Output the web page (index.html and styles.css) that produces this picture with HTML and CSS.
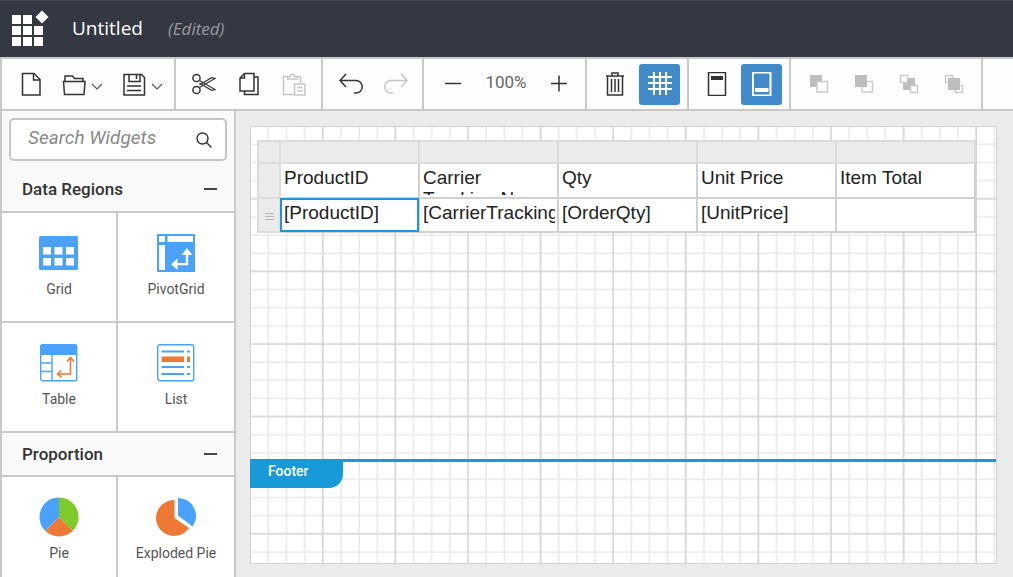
FILE: index.html
```html
<!DOCTYPE html>
<html lang="en">
<head>
<meta charset="utf-8">
<meta name="viewport" content="width=device-width, initial-scale=1">
<title>Untitled - Report Designer</title>
<link rel="stylesheet" href="styles.css">
</head>
<body>
<div class="app">
  <header class="titlebar">
    <svg class="logo" width="38" height="36" viewBox="0 0 38 36" fill="#fff" aria-hidden="true">
      <path d="M1 5h9v9H1zM12 5h9v9h-9zM1 16h9v9H1zM12 16h9v9h-9zM23 16h9v9h-9zM1 27h9v9H1zM12 27h9v9h-9zM23 27h9v9h-9z"/>
      <path d="M31 0.500l6.500 6.500-6.500 6.500-6.500-6.500z"/>
    </svg>
    <h1 class="doc-name">Untitled</h1>
    <span class="doc-state">(Edited)</span>
  </header>

  <div class="toolbar" role="toolbar" aria-label="Report tools">
    <div class="group files">
      <button class="tool" aria-label="New"><svg viewBox="0 0 24 24"><path d="M3.500 1.500h11.500l6 6V23H3.500z"/><path d="M14.500 1.500V8H21"/></svg></button>
      <button class="tool menu" aria-label="Open"><svg viewBox="0 0 24 24"><path d="M2.500 22.500L1.500 9.500h21.500L22 22.500zM3 9.500V4h7.500l2 2.500H21v3"/></svg><svg class="chevron" viewBox="0 0 12 24"><path d="M1 12l5 5 5-5"/></svg></button>
      <button class="tool menu" aria-label="Save"><svg viewBox="0 0 24 24"><path d="M2 2.500h17.500l3 3V23H2zM7 2.500v7h11v-7M14.500 3v4M5 14h14M5 18.500h14"/></svg><svg class="chevron" viewBox="0 0 12 24"><path d="M1 12l5 5 5-5"/></svg></button>
    </div>
    <div class="group clipboard">
      <button class="tool" aria-label="Cut"><svg viewBox="0 0 24 24"><circle cx="4.500" cy="6" r="3.600"/><circle cx="4.500" cy="18" r="3.600"/><path stroke-width="1.200" d="M7.500 8.500L23 17.500l-3.500.8L7.500 11M7.500 15.500L23 6.500l-3.500-.8L7.500 13"/></svg></button>
      <button class="tool" aria-label="Copy"><svg viewBox="0 0 24 24"><path d="M7.500 1.500H17V19H3V6zM7.500 1.500V6H3M17 5h4v17.500H7.500V19"/></svg></button>
      <button class="tool off" aria-label="Paste" disabled><svg viewBox="0 0 24 24"><path d="M12 22.500H1.500V4.500H6M14.500 4.500h4V11M5.500 7V4.500h2.800a2.200 2.200 0 0 1 4.400 0h2.800V7zM12.500 12H23v11H12.500zM15 15.500h5.500M15 19h5.500"/></svg></button>
    </div>
    <div class="group history">
      <button class="tool" aria-label="Undo"><svg viewBox="0 0 24 24"><path d="M7 2L1 8.500 7 15M1 8.500h16a6 6 0 0 1 0 12.500h-2"/></svg></button>
      <button class="tool off" aria-label="Redo" disabled><svg viewBox="0 0 24 24"><path d="M17 2l6 6.500L17 15M23 8.500H7A6 6 0 0 0 7 21h2"/></svg></button>
    </div>
    <div class="group zoom">
      <button class="tool" aria-label="Zoom out"><svg viewBox="0 0 24 24"><path d="M4 11.500h16"/></svg></button>
      <output class="zoom-value">100%</output>
      <button class="tool" aria-label="Zoom in"><svg viewBox="0 0 24 24"><path d="M4 11.500h16M12 3.500v16"/></svg></button>
    </div>
    <div class="group toggles">
      <button class="tool" aria-label="Delete"><svg viewBox="0 0 24 24"><path d="M4.500 4h15v19h-15zM3 4h18M9 3.500V1h6v2.500M8.500 7v13M12 7v13M15.500 7v13"/></svg></button>
      <button class="tool on" aria-label="Show gridlines" aria-pressed="true"><svg viewBox="0 0 24 24"><path stroke-width="2" d="M6 0v23M12 0v23M18 0v23M0 5h24M0 11h24M0 17h24"/></svg></button>
    </div>
    <div class="group toggles">
      <button class="tool" aria-label="Header"><svg viewBox="0 0 24 24"><path d="M3.500 0.500h17v23h-17z"/><path fill="#333" stroke="none" d="M6 4h12v4H6z"/></svg></button>
      <button class="tool on" aria-label="Footer" aria-pressed="true"><svg viewBox="0 0 24 24"><path stroke-width="2" d="M3 0.500h17.500v23H3z"/><path fill="#fff" stroke="none" d="M5 16h13.500v4H5z"/></svg></button>
    </div>
    <div class="group order">
      <button class="tool off" aria-label="Send to back" disabled><svg viewBox="0 0 24 24"><path class="solid" d="M3 3h12v12H3z"/><path class="hollow" d="M10 9.500h10.500V20H10z"/></svg></button>
      <button class="tool off" aria-label="Bring to front" disabled><svg viewBox="0 0 24 24"><path class="hollow" d="M10 9.500h10.500V20H10z"/><path class="solid" d="M3 3h12v12H3z"/></svg></button>
      <button class="tool off" aria-label="Send backward" disabled><svg viewBox="0 0 24 24"><path class="solid" d="M6 6h12v12H6z"/><path class="hollow" d="M3.500 3.500h7v7h-7zM13.500 13.500h7v7h-7z"/></svg></button>
      <button class="tool off" aria-label="Bring forward" disabled><svg viewBox="0 0 24 24"><path class="hollow" d="M3.500 3.500h7v7h-7zM13.500 13.500h7v7h-7z"/><path class="solid" d="M6 6h12v12H6z"/></svg></button>
    </div>
  </div>

  <main class="workspace">
    <aside class="sidebar">
      <div class="search">
        <input type="search" placeholder="Search Widgets" aria-label="Search Widgets">
        <svg width="18" height="18" viewBox="0 0 18 18" fill="none" stroke="#333" stroke-width="1.400" aria-hidden="true"><circle cx="7.500" cy="7.500" r="5.500"/><path d="M11.500 11.500l5 5"/></svg>
      </div>

      <section>
        <button class="category first" aria-expanded="true"><span>Data Regions</span><i class="dash"></i></button>
        <div class="tiles">
          <button class="tile">
            <svg viewBox="0 0 40 40"><rect y="3" width="39" height="34" rx="1.500" fill="#4aa2fc"/><path fill="#fff" d="M4 14h8v7.500H4zM15.500 14h8v7.500h-8zM27 14h8v7.500h-8zM4 25h8v7.500H4zM15.500 25h8v7.500h-8zM27 25h8v7.500h-8z"/></svg>
            <span>Grid</span>
          </button>
          <button class="tile">
            <svg viewBox="0 0 40 40"><path fill="#4aa2fc" d="M1 1h38v38H1z"/><path fill="#fff" d="M3 3h6v6H3zM11.500 3H37v6H11.500zM3 12h6v25H3zM31 15l5.500 7h-4.300v10.200H21.500v4.800l-6.500-5.800 6.500-5.700V30h8.300v-8h-4.300z"/></svg>
            <span>PivotGrid</span>
          </button>
          <button class="tile">
            <svg viewBox="0 0 40 40" fill="none"><rect x="1.700" y="1.700" width="36" height="36" rx="2" stroke="#4aa2fc" stroke-width="1.400"/><path fill="#4aa2fc" d="M1 3l2-2h33l2 2v9H1z"/><path stroke="#4aa2fc" stroke-width="1.400" d="M13 12v26M1 20h12M1 28.500h12"/><path stroke="#ee7935" stroke-width="1.600" d="M31.500 15v16H19M28 18.500l3.500-4 3.500 4M22.500 27.500L18.500 31l4 3.500"/></svg>
            <span>Table</span>
          </button>
          <button class="tile">
            <svg viewBox="0 0 40 40" fill="none"><rect x="1.700" y="1.700" width="36" height="36" rx="2" stroke="#4aa2fc" stroke-width="1.400"/><path stroke="#4aa2fc" stroke-width="1.800" d="M5.500 8.500H28M31 8.500h3M5.500 24H28M31 24h3M5.500 31H28M31 31h3"/><path fill="#ee7935" d="M5.500 13.500H28v5.500H5.500zM31 13.500h3v5.500h-3z"/></svg>
            <span>List</span>
          </button>
        </div>
      </section>

      <section>
        <button class="category" aria-expanded="true"><span>Proportion</span><i class="dash"></i></button>
        <div class="tiles">
          <button class="tile">
            <svg viewBox="0 0 40 40"><path fill="#7dcb29" d="M20 20V.5A19.500 19.500 0 0 1 33.800 33.800z"/><path fill="#ee7935" d="M20 20l13.800 13.800a19.500 19.500 0 0 1-27.600 0z"/><path fill="#4aa2fc" d="M20 20L6.200 33.800A19.500 19.500 0 0 1 20 .5z"/></svg>
            <span>Pie</span>
          </button>
          <button class="tile">
            <svg viewBox="0 0 40 40"><path fill="#ee7935" d="M18.500 21V3a18 18 0 1 0 14.500 28z"/><path fill="#4aa2fc" d="M22 1a18 18 0 0 1 14.500 28.500L22 18.500z"/></svg>
            <span>Exploded Pie</span>
          </button>
        </div>
      </section>
    </aside>

    <div class="canvas">
      <div class="paper">
        <section class="area body-area">
          <svg class="gridlines" aria-hidden="true">
            <defs>
              <pattern id="minor" width="18.150" height="18.150" patternUnits="userSpaceOnUse"><path d="M18.150 0v18.150H0" fill="none" stroke="#e9e9e9" stroke-width="3"/></pattern>
              <pattern id="major" width="72.600" height="72.600" patternUnits="userSpaceOnUse"><path d="M72.600 0v72.600H0" fill="none" stroke="#d6d6d6" stroke-width="3"/></pattern>
            </defs>
            <rect width="100%" height="100%" fill="url(#minor)"/>
            <rect width="100%" height="100%" fill="url(#major)"/>
          </svg>
          <table class="tablix">
            <colgroup><col class="grip-col"><col><col><col><col><col></colgroup>
            <thead>
              <tr class="handles"><td></td><td></td><td></td><td></td><td></td><td></td></tr>
              <tr><td class="grip"></td><th><div>ProductID</div></th><th><div>Carrier Tracking No</div></th><th><div>Qty</div></th><th><div>Unit Price</div></th><th><div>Item Total</div></th></tr>
            </thead>
            <tbody>
              <tr><td class="grip"><svg width="9" height="9" viewBox="0 0 9 9" stroke="#b4b4b4" aria-hidden="true"><path d="M0 1.500h9M0 4.500h9M0 7.500h9"/></svg></td><td class="selected"><div>[ProductID]</div></td><td><div>[CarrierTracking]</div></td><td><div>[OrderQty]</div></td><td><div>[UnitPrice]</div></td><td><div></div></td></tr>
            </tbody>
          </table>
        </section>
        <section class="area footer-area">
          <svg class="gridlines" aria-hidden="true">
            <rect width="100%" height="100%" fill="url(#minor)"/>
            <rect width="100%" height="100%" fill="url(#major)"/>
          </svg>
          <span class="footer-tag">Footer</span>
        </section>
      </div>
    </div>
  </main>
</div>
</body>
</html>
```

FILE: styles.css
```css
* { box-sizing: border-box; }

body {
  margin: 0;
  font-family: Roboto, "Liberation Sans", sans-serif;
  color: #333;
}

button {
  margin: 0;
  padding: 0;
  border: 0;
  background: none;
  font: inherit;
  color: inherit;
}

.app {
  display: flex;
  flex-direction: column;
  height: 100vh;
  overflow: hidden;
}

/* Title bar */
.titlebar {
  display: flex;
  align-items: center;
  flex: none;
  height: 57px;
  padding: 0 11px 2px;
  border-top: 1px solid #444955;
  background: #343843;
  font-family: "Open Sans", "Noto Sans", sans-serif;
}

.logo { flex: none; }

.doc-name {
  margin: 0 25px 0 23px;
  font-size: 19px;
  font-weight: 400;
  color: #fff;
}

.doc-state {
  font-size: 17px;
  font-style: italic;
  color: #999ba1;
}

/* Toolbar */
.toolbar {
  display: flex;
  flex: none;
  height: 54px;
  border: 2px solid #c9c9c9;
  border-right: 0;
  background: #fdfdfd;
}

.group {
  display: flex;
  align-items: center;
  gap: 21px;
  padding: 0 16px;
  border-right: 2px solid #c9c9c9;
}

.group.files { gap: 19px; padding: 0 11px 0 17px; }
.group.clipboard { padding-right: 15px; }
.group.history { padding-right: 14px; }
.group.zoom { gap: 0; padding: 0 14px 0 17px; }
.group.toggles { gap: 12px; padding: 0 7px 0 16px; }
.group.order { padding-right: 15px; }

.tool {
  display: flex;
  align-items: center;
  justify-content: center;
}

.tool svg {
  width: 24px;
  height: 24px;
  fill: none;
  stroke: #333;
  stroke-width: 1.5;
}

.menu { gap: 5px; }
.menu .chevron { width: 12px; stroke: #555; stroke-width: 1.2; }

.tool.off svg { stroke: #c6c6c6; }
.tool .solid { fill: #bdbdbd; stroke: none; }
.tool .hollow { fill: #fdfdfd; stroke: #ccc; }

.tool.on {
  width: 41px;
  height: 41px;
  border-radius: 3px;
  background: #428bca;
}

.tool.on svg { stroke: #fff; }

.zoom-value {
  width: 82px;
  padding-bottom: 4px;
  font-size: 17px;
  text-align: center;
  color: #666;
}

/* Widget panel */
.workspace {
  display: flex;
  flex: 1;
  min-height: 0;
}

.sidebar {
  flex: none;
  width: 236px;
  overflow: hidden;
  border: 2px solid #c9c9c9;
  border-width: 0 2px;
  background: #f9f9f9;
}

.search {
  display: flex;
  align-items: center;
  height: 43px;
  margin: 7px 7px 0;
  padding: 0 12px 0 17px;
  border: 2px solid #c6c6c6;
  border-radius: 5px;
  background: #fff;
}

.search input {
  flex: 1;
  min-width: 0;
  padding: 0 0 4px;
  border: 0;
  outline: 0;
  background: none;
  font: italic 19px Roboto, sans-serif;
}

.search input::placeholder { color: #888; opacity: 1; }

.category {
  display: flex;
  align-items: center;
  justify-content: space-between;
  width: 100%;
  height: 44px;
  padding: 0 17px 0 20px;
  border-bottom: 2px solid #c9c9c9;
  font-size: 17px;
  font-weight: 500;
}

.category.first { height: 52px; padding-top: 6px; }

.dash { width: 13px; height: 2px; background: #444; }

.tiles {
  display: grid;
  grid-template-columns: 57fr 58fr;
  gap: 2px;
  border-bottom: 2px solid #c9c9c9;
  background: #c9c9c9;
}

.tile {
  display: flex;
  flex-direction: column;
  align-items: center;
  gap: 7px;
  height: 108px;
  padding-top: 20px;
  background: #fff;
  font-size: 14px;
  line-height: 18px;
  color: #555;
}

.tile svg { width: 40px; height: 40px; }

/* Design surface */
.canvas {
  display: flex;
  flex: 1;
  min-width: 0;
  padding: 15px 16px 13px 14px;
  background: #ebebeb;
}

.paper {
  display: flex;
  flex: 1;
  flex-direction: column;
  min-width: 0;
  border: 1px solid #d2d2d2;
  background: #fff;
}

.area { position: relative; }
.body-area { flex: 1; }

.footer-area {
  flex: none;
  height: 104px;
  border-top: 3px solid #189ad9;
}

.gridlines {
  position: absolute;
  inset: 0;
  width: 100%;
  height: 100%;
}

.footer-tag {
  position: absolute;
  top: -3px;
  left: -1px;
  padding: 3px 34px 8px 18px;
  border-bottom-right-radius: 14px;
  background: #189ad9;
  font-size: 14px;
  font-weight: 500;
  line-height: 18px;
  color: #fff;
}

.tablix {
  position: relative;
  width: calc(100% - 26px);
  margin: 13px 0 0 6px;
  table-layout: fixed;
  border-collapse: collapse;
  background: #fff;
  font: 19px/21px "Liberation Sans", Arial, sans-serif;
  color: #222;
}

.grip-col { width: 22px; }

.tablix td,
.tablix th {
  height: 34px;
  padding: 0;
  border: 2px solid #d0d0d0;
  font-weight: 400;
  text-align: left;
  vertical-align: top;
}

.tablix th { height: 35px; }

.tablix div {
  height: 31px;
  margin-right: 2px;
  padding: 3px 0 0 3px;
  overflow: hidden;
}

.tablix tbody div { height: 30px; }

.tablix .handles td {
  height: 22px;
  border-color: #dcdcdc;
  background: #ebebeb;
}

.tablix .grip {
  border-color: #dcdcdc;
  background: #ebebeb;
  text-align: center;
  vertical-align: middle;
  line-height: 9px;
}

.tablix .selected {
  outline: 2px solid #189ad9;
  outline-offset: -2px;
}
```
